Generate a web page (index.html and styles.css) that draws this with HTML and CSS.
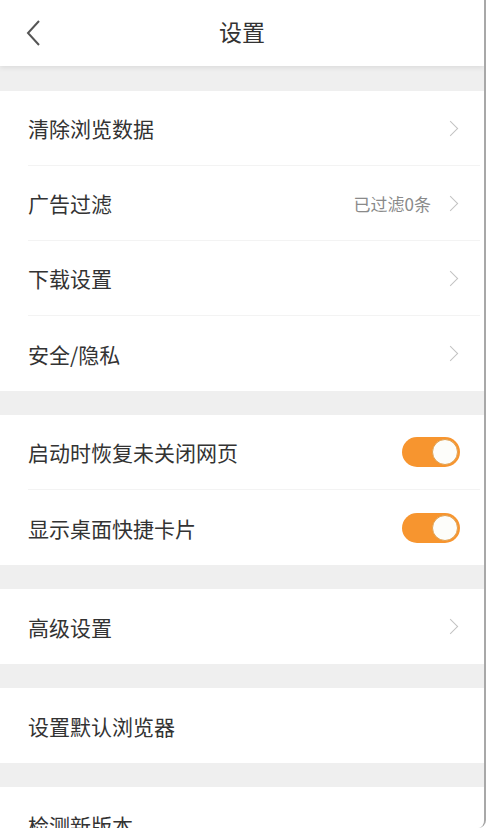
FILE: index.html
```html
<!DOCTYPE html>
<html lang="zh-CN">
<head>
    <meta charset="UTF-8">
    <meta name="viewport" content="width=device-width, initial-scale=1.0">
    <title>设置</title>
    <link rel="stylesheet" href="styles.css">
</head>
<body>
    <div class="screen">
        <div class="top-bar">
            <svg class="back" width="16" height="26" viewBox="0 0 16 26">
                <path d="M13 1 L2 13 L13 25" fill="none" stroke="#555" stroke-width="2"/>
            </svg>
            <h1>设置</h1>
        </div>

        <div class="group">
            <div class="row"><span class="label">清除浏览数据</span><span class="arrow"></span></div>
            <div class="row"><span class="label">广告过滤</span><span class="note">已过滤0条</span><span class="arrow"></span></div>
            <div class="row"><span class="label">下载设置</span><span class="arrow"></span></div>
            <div class="row"><span class="label">安全/隐私</span><span class="arrow"></span></div>
        </div>

        <div class="group">
            <div class="row plain"><span class="label">启动时恢复未关闭网页</span><span class="switch on"></span></div>
            <div class="row plain"><span class="label">显示桌面快捷卡片</span><span class="switch on"></span></div>
        </div>

        <div class="group">
            <div class="row"><span class="label">高级设置</span><span class="arrow"></span></div>
        </div>

        <div class="group">
            <div class="row"><span class="label">设置默认浏览器</span></div>
        </div>

        <div class="group">
            <div class="row"><span class="label">检测新版本</span></div>
        </div>
    </div>
</body>
</html>
```

FILE: styles.css
```css
body {
    margin: 0;
    background-color: #ffffff;
    font-family: "Noto Sans CJK SC", "Noto Sans", sans-serif;
    color: #333;
}
.screen {
    width: 484px;
    height: 828px;
    overflow: hidden;
    background-color: #efefef;
    border-right: 2px solid #a8a8a8;
    border-bottom-right-radius: 8px;
}
.top-bar {
    position: relative;
    height: 66px;
    background-color: #fff;
    display: flex;
    align-items: center;
    justify-content: center;
    box-shadow: 0 2px 5px rgba(0,0,0,0.08);
    margin-bottom: 25px;
}
.top-bar .back {
    position: absolute;
    left: 26px;
    top: 20px;
}
.top-bar h1 {
    margin: 0 0 4px;
    font-size: 23px;
    font-weight: normal;
    color: #333;
}
.group {
    background-color: #fff;
    margin-bottom: 24px;
}
.row {
    height: 75px;
    display: flex;
    align-items: center;
    margin-left: 28px;
    margin-right: 4px;
    padding-right: 20px;
    border-bottom: 1px solid #f3f3f3;
    box-sizing: border-box;
}
.row:last-child {
    border-bottom: none;
}
.label {
    flex: 1;
    font-size: 21px;
    color: #333;
}
.note {
    font-size: 17px;
    color: #8a8a8a;
    margin-right: 14px;
}
.arrow {
    width: 10px;
    height: 10px;
    border-top: 1.5px solid #c2c2c2;
    border-right: 1.5px solid #c2c2c2;
    transform: rotate(45deg);
    margin-right: 4px;
}
.switch {
    position: relative;
    width: 58px;
    height: 30px;
    border-radius: 15px;
    background-color: #f7952f;
    box-sizing: border-box;
}
.switch::after {
    content: "";
    position: absolute;
    right: 2px;
    top: 2px;
    width: 26px;
    height: 26px;
    border-radius: 50%;
    background-color: #fdfdfa;
    border: 1px solid #e0a050;
    box-sizing: border-box;
}
```
